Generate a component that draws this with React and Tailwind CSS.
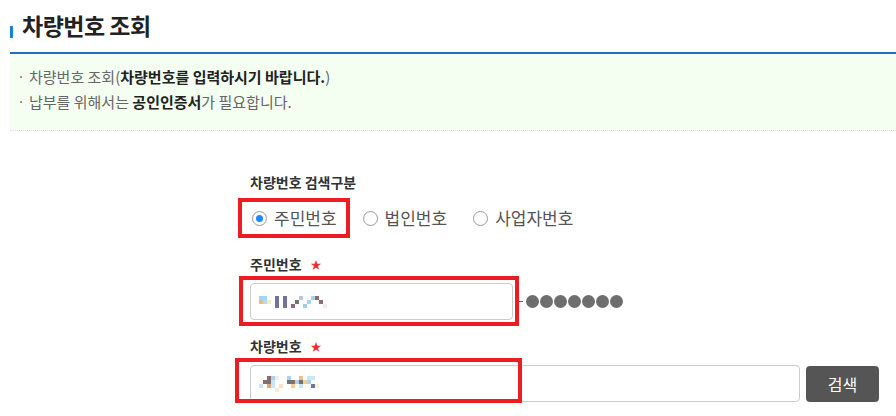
import React from 'react';

const FONT = { fontFamily: '"Noto Sans CJK KR", "Noto Sans", sans-serif' };

// 모자이크 처리된 입력값 (4px 블록)
const mosaicJumin = [
  [0, 0, '#a9d3f2'], [0, 1, '#dcc08e'], [1, 0, '#a9d3f2'], [1, 1, '#b9d8ee'], [2, 1, '#f6ecc0'],
  [4, 0, '#6f7499'], [4, 1, '#6f7499'], [4, 2, '#6f7499'], [6, 0, '#6f7499'], [6, 1, '#6f7499'], [6, 2, '#6f7499'],
  [8, 2, '#8c6c6c'], [9, 1, '#747474'], [10, 0, '#b9c7dd'],
  [11, 2, '#9fcdef'], [12, 1, '#a9d3f2'], [13, 0, '#a9d3f2'], [14, 0, '#8c6c6c'], [15, 1, '#8c6c6c'], [16, 2, '#f9e6ee'],
];

const mosaicCar = [
  [0, 2, '#c7e6f7'], [1, 1, '#8c6c6c'], [2, 0, '#8c6c6c'], [2, 1, '#737373'], [2, 2, '#d1ad88'],
  [3, 0, '#a9d3f2'], [3, 1, '#c7e6f7'], [3, 2, '#c7e6f7'], [4, 0, '#eeeeee'], [4, 3, '#f8eccc'], [5, 2, '#f6e5b8'],
  [7, 0, '#a9d3f2'], [7, 1, '#737373'], [8, 1, '#8c6c6c'], [8, 2, '#f3cf9b'],
  [9, 1, '#a9d3f2'], [10, 0, '#e2c28f'], [10, 1, '#737373'], [10, 2, '#c7e6f7'], [11, 1, '#f3cf9b'],
  [12, 0, '#c7e6f7'], [12, 1, '#a9d3f2'], [13, 0, '#c7e6f7'], [13, 2, '#6f7499'], [14, 2, '#f8f1d8'],
];

const Mosaic = ({ cells, width, height }) => (
  <svg width={width} height={height} viewBox={`0 0 ${width} ${height}`}>
    {cells.map(([x, y, c], i) => (
      <rect key={i} x={x * 4} y={y * 4} width="4" height="4" fill={c} />
    ))}
  </svg>
);

const Radio = ({ label, checked }) => (
  <label className="flex items-center gap-[7px] text-[17px] leading-[20px] text-[#555]">
    <span className="w-[15px] h-[15px] rounded-full border border-[#999] bg-white flex items-center justify-center">
      {checked && <span className="w-[7px] h-[7px] rounded-full bg-[#1a8cff]" />}
    </span>
    {label}
  </label>
);

const RedBox = ({ className }) => (
  <span className={`absolute border-[4px] border-[#ed1c24] pointer-events-none ${className}`} />
);

const FieldLabel = ({ children }) => (
  <div className="flex items-center gap-[9px] text-[14px] leading-[20px] font-bold text-[#333]">
    {children}
    <span className="text-[#e8302e] text-[11px] leading-none">★</span>
  </div>
);

export default function App() {
  return (
    <div className="w-[896px] h-[416px] bg-white overflow-hidden pl-[10px]" style={FONT}>
      {/* 타이틀 */}
      <div className="h-[54px] flex items-end pb-[13px] border-b-2 border-[#1f6fbf]">
        <span className="w-[3px] h-[12px] bg-[#1f7fd6] mb-[1px]" />
        <h2 className="ml-[9px] text-[23px] leading-[28px] font-bold text-[#222] tracking-[-0.5px]">차량번호 조회</h2>
      </div>

      {/* 안내 */}
      <div className="bg-[#f4fff2] border-b border-dotted border-[#dddddd] pt-[10px] pb-[16px] pl-[10px] text-[15px] leading-[25px] text-[#666]">
        <p className="flex items-center">
          <span className="w-[2px] h-[2px] bg-[#999] mr-[7px]" />
          차량번호 조회(<b className="text-[#222]">차량번호를 입력하시기 바랍니다.</b>)
        </p>
        <p className="flex items-center">
          <span className="w-[2px] h-[2px] bg-[#999] mr-[7px]" />
          납부를 위해서는&nbsp;<b className="text-[#222]">공인인증서</b>가 필요합니다.
        </p>
      </div>

      {/* 조회 폼 */}
      <div className="ml-[240px] mt-[41px] w-[630px]">
        <div className="text-[14px] leading-[20px] font-bold text-[#333]">차량번호 검색구분</div>

        <div className="mt-[6px] h-[40px] flex items-center gap-[26px] pl-[2px]">
          <div className="relative">
            <Radio label="주민번호" checked />
            <RedBox className="-left-[14px] -right-[13px] -top-[10px] -bottom-[10px]" />
          </div>
          <Radio label="법인번호" />
          <Radio label="사업자번호" />
        </div>

        <div className="mt-[16px]">
          <FieldLabel>주민번호</FieldLabel>
        </div>
        <div className="mt-[9px] flex items-center">
          <div className="relative">
            <div className="w-[263px] h-[37px] border border-[#cccccc] rounded-[4px] bg-white flex items-center pl-[8px]">
              <Mosaic cells={mosaicJumin} width={68} height={12} />
            </div>
            <RedBox className="-left-[11px] -right-[6px] -top-[7px] -bottom-[6px]" />
          </div>
          <span className="ml-[6px] w-[4px] h-[1px] bg-[#666]" />
          <div className="ml-[3px] flex gap-[1px]">
            {[0, 1, 2, 3, 4, 5, 6].map((i) => (
              <span key={i} className="w-[13px] h-[13px] rounded-full bg-[#6e6e6e]" />
            ))}
          </div>
        </div>

        <div className="mt-[16px]">
          <FieldLabel>차량번호</FieldLabel>
        </div>
        <div className="mt-[9px] flex items-center gap-[6px]">
          <div className="relative">
            <div className="w-[550px] h-[37px] border border-[#cccccc] rounded-[4px] bg-white flex items-center pl-[8px]">
              <Mosaic cells={mosaicCar} width={60} height={16} />
            </div>
            <RedBox className="-left-[15px] w-[287px] -top-[7px] bottom-[-1px]" />
          </div>
          <button className="w-[73px] h-[36px] rounded-[4px] bg-[#555555] text-white text-[16px]">검색</button>
        </div>
      </div>
    </div>
  );
}
